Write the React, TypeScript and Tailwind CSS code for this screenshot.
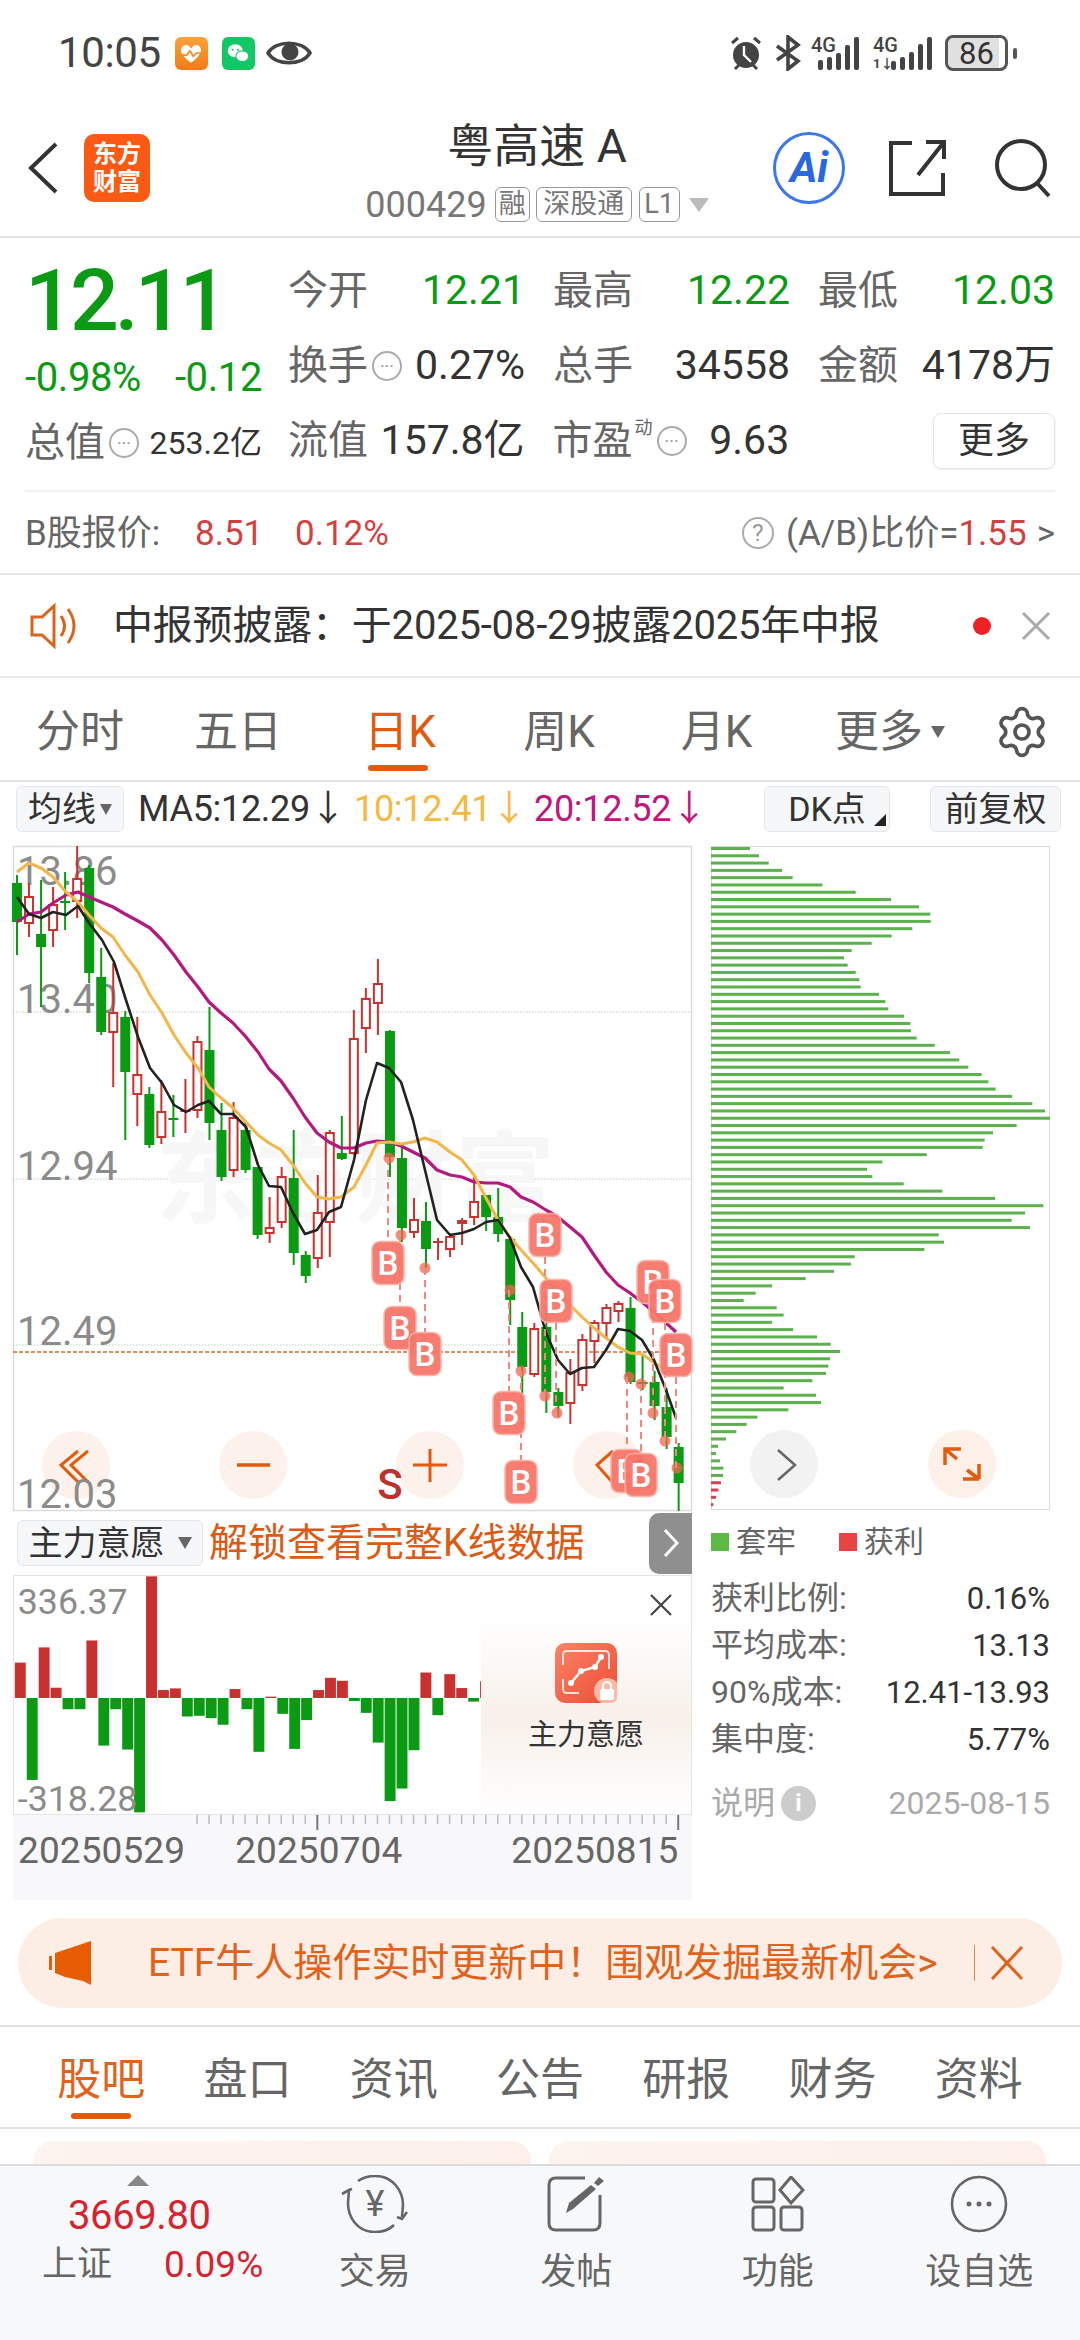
import React from 'react';
import { Settings } from 'lucide-react';

const GREEN = '#0a9a14';
const RED = '#c8322f';

// high, bodyTop, bodyBottom, low, kind (g = solid green, r = solid red, h = hollow red)
const candles: [number, number, number, number, string][] = [
  [875, 883, 922, 955, 'g'], [883, 897, 923, 937, 'h'], [880, 934, 947, 1007, 'g'], [887, 905, 930, 947, 'h'],
  [872, 901, 903, 930, 'g'], [846, 879, 901, 918, 'h'], [865, 868, 973, 983, 'g'], [948, 977, 1032, 1035, 'g'],
  [963, 1013, 1032, 1087, 'h'], [1011, 1017, 1072, 1140, 'g'], [1017, 1075, 1094, 1126, 'h'], [1087, 1094, 1145, 1148, 'g'],
  [1080, 1112, 1137, 1144, 'h'], [1095, 1118, 1120, 1137, 'g'], [1079, 1110, 1112, 1133, 'r'], [1036, 1042, 1110, 1118, 'h'],
  [1007, 1050, 1123, 1140, 'g'], [1103, 1130, 1177, 1181, 'g'], [1102, 1118, 1170, 1177, 'h'], [1122, 1130, 1170, 1173, 'g'],
  [1167, 1167, 1235, 1239, 'g'], [1197, 1228, 1233, 1243, 'h'], [1167, 1177, 1222, 1228, 'h'], [1130, 1178, 1253, 1265, 'g'],
  [1251, 1255, 1276, 1283, 'g'], [1175, 1213, 1258, 1268, 'h'], [1130, 1133, 1222, 1257, 'h'], [1116, 1153, 1159, 1160, 'g'],
  [1010, 1039, 1153, 1155, 'h'], [988, 999, 1028, 1053, 'h'], [959, 984, 1003, 1035, 'h'], [1030, 1031, 1157, 1177, 'g'],
  [1148, 1158, 1228, 1242, 'g'], [1198, 1220, 1232, 1238, 'h'], [1202, 1221, 1249, 1268, 'g'], [1238, 1241, 1243, 1260, 'r'],
  [1233, 1237, 1249, 1257, 'h'], [1218, 1220, 1224, 1245, 'r'], [1177, 1202, 1217, 1225, 'h'], [1195, 1195, 1217, 1231, 'g'],
  [1188, 1217, 1234, 1242, 'g'], [1238, 1239, 1300, 1325, 'g'], [1312, 1327, 1367, 1395, 'g'], [1323, 1329, 1374, 1377, 'h'],
  [1310, 1327, 1392, 1413, 'g'], [1388, 1392, 1406, 1417, 'g'], [1359, 1373, 1403, 1424, 'h'], [1334, 1340, 1385, 1391, 'h'],
  [1320, 1323, 1341, 1363, 'h'], [1304, 1308, 1323, 1338, 'h'], [1301, 1304, 1311, 1322, 'h'], [1297, 1308, 1382, 1384, 'g'],
  [1355, 1382, 1384, 1390, 'g'], [1371, 1382, 1406, 1420, 'g'], [1388, 1407, 1437, 1449, 'g'], [1443, 1447, 1483, 1511, 'g'],
];

const ma5 = '17,897 29,914 41,918 53,912 66,915 78,906 89,923 102,940 114,962 125,997 138,1037 150,1068 162,1083 174,1105 186,1112 198,1105 209,1101 221,1114 233,1114 246,1127 258,1165 269,1186 281,1187 293,1213 305,1234 317,1230 329,1212 341,1207 354,1160 366,1100 377,1063 389,1068 401,1082 413,1120 425,1170 437,1220 450,1235 462,1233 474,1229 486,1222 498,1220 510,1238 521,1267 533,1287 546,1333 558,1360 570,1374 582,1368 594,1367 606,1350 618,1329 630,1331 642,1340 654,1360 666,1390 676,1418';
const ma10 = '17,872 29,863 41,868 53,877 66,892 78,902 89,915 101,928 113,937 125,955 138,972 150,995 162,1013 174,1035 186,1053 198,1068 209,1087 221,1098 233,1108 246,1122 258,1135 269,1143 281,1150 293,1165 305,1183 317,1197 329,1199 341,1197 354,1187 366,1165 377,1143 389,1142 401,1144 413,1142 425,1138 437,1142 450,1152 462,1160 474,1175 486,1198 498,1220 510,1237 521,1250 533,1263 546,1278 558,1290 570,1305 582,1317 594,1328 606,1338 618,1347 630,1353 642,1354 656,1364 674,1373';
const ma20 = '17,922 29,914 41,912 53,903 66,895 78,892 89,897 101,902 113,907 125,914 138,921 150,928 162,940 174,955 186,972 198,987 209,1002 221,1013 233,1023 246,1037 258,1052 269,1069 281,1081 293,1098 305,1117 317,1133 329,1142 341,1148 354,1148 366,1143 377,1141 389,1142 401,1146 413,1152 425,1158 437,1170 450,1175 462,1177 474,1182 486,1183 498,1183 510,1187 521,1197 533,1202 546,1210 558,1217 570,1227 582,1237 594,1255 606,1272 618,1285 630,1293 642,1302 654,1312 665,1322 676,1332';

// marker x, marker y, dash from, dash to
const buyMarks: [number, number, number, number][] = [
  [388, 1263, 1158, 1241], [400, 1328, 1235, 1306], [425, 1354, 1268, 1332], [545, 1235, 1257, 1396],
  [556, 1301, 1323, 1413], [509, 1413, 1290, 1391], [521, 1482, 1371, 1460], [653, 1282, 1304, 1413],
  [665, 1301, 1323, 1441], [676, 1355, 1377, 1468], [627, 1471, 1377, 1450], [641, 1475, 1384, 1453],
];
const dots: [number, number][] = [
  [389, 1158], [401, 1235], [425, 1268], [510, 1290], [521, 1371], [545, 1396], [557, 1413], [629, 1377], [641, 1384], [653, 1413], [665, 1441], [677, 1468],
];

const chipEnds = [180, 207, 236, 276, 308, 397, 497, 603, 687, 721, 722, 667, 605, 545, 485, 462, 473, 497, 508, 512, 567, 586, 595, 642, 661, 663, 680, 734, 780, 808, 835, 875, 895, 917, 966, 1027, 1065, 1080, 980, 909, 884, 878, 710, 577, 531, 547, 641, 757, 915, 1060, 1005, 965, 1020, 746, 762, 703, 494, 483, 432, 347, 246, 197, 161, 260, 281, 246, 309, 381, 422, 450, 420, 415, 408, 367, 281, 378, 393, 295, 202, 170, 139, 108, 84, 78, 90, 100, 99, 93, 85, 78, 70];

const flowBars = [487, 842, 441, 563, 628, 628, 420, 738, 628, 750, 940, 226, 570, 565, 650, 648, 655, 675, 567, 628, 757, 590, 642, 748, 661, 570, 533, 542, 603, 639, 729, 906, 868, 752, 517, 646, 522, 564, 605, 543];

const candleX = (i: number) => 17 + 12.03 * i;

const Ball = ({ x, fill = '#fdf0e9' }: { x: number; fill?: string }) => <circle cx={x} cy={1465} r={34} fill={fill} opacity={0.92} />;

const KChart = () => (
  <svg viewBox="13 846 679 665" className="block h-[665px] w-[679px] overflow-visible">
    <rect x="13.5" y="846.5" width="678" height="664" fill="#fff" stroke="#dcdcdc" strokeWidth="1.5" />
    {[1012, 1179, 1345].map((y) => (
      <line key={y} x1="13" x2="692" y1={y} y2={y} stroke="#c8c8c8" strokeDasharray="1.5 1.5" />
    ))}
    <text x="355" y="1215" textAnchor="middle" fontSize="100" fontWeight="700" fill="#f7f7f7">东方财富</text>
    <line x1="13" x2="692" y1="1352" y2="1352" stroke="#cf6a30" strokeWidth="1.5" strokeDasharray="4 2" />
    <Ball x={76} />
    <Ball x={253} />
    <Ball x={430} />
    <Ball x={607} />
    <path d="M78 1451 L61 1465 L78 1482 M88 1451 L71 1465 L88 1482" fill="none" stroke="#e35a0d" strokeWidth="3" />
    <path d="M237 1465 H270" stroke="#e35a0d" strokeWidth="3.5" />
    <path d="M413 1465 H447 M430 1449 V1482" stroke="#e35a0d" strokeWidth="3" />
    <path d="M613 1451 L597 1465 L613 1483" fill="none" stroke="#e35a0d" strokeWidth="3" />
    <g fill="#8b8b8b" fontSize="40">
      <text x="17" y="885">13.86</text>
      <text x="17" y="1013">13.40</text>
      <text x="17" y="1180">12.94</text>
      <text x="17" y="1345">12.49</text>
      <text x="17" y="1508">12.03</text>
    </g>
    {candles.map(([high, top, bottom, low, kind], i) => {
      const x = candleX(i);
      const color = kind === 'g' ? GREEN : RED;
      return (
        <g key={i}>
          <line x1={x} x2={x} y1={high} y2={low} stroke={color} strokeWidth="2" />
          {kind === 'h' ? (
            <rect x={x - 4} y={top} width="8" height={bottom - top} fill="#fff" stroke={color} strokeWidth="2" />
          ) : (
            <rect x={x - 5} y={top} width="10" height={Math.max(bottom - top, 2)} fill={color} />
          )}
        </g>
      );
    })}
    <polyline points={ma20} fill="none" stroke="#b5187f" strokeWidth="3.2" strokeLinejoin="round" />
    <polyline points={ma10} fill="none" stroke="#f2b64b" strokeWidth="3" strokeLinejoin="round" />
    <polyline points={ma5} fill="none" stroke="#222" strokeWidth="2.6" strokeLinejoin="round" />
    {dots.map(([x, y], i) => (
      <circle key={i} cx={x} cy={y} r="5.5" fill="#f0674f" opacity="0.75" />
    ))}
    {buyMarks.map(([x, y, from, to], i) => (
      <line key={i} x1={x} x2={x} y1={from} y2={to} stroke="#f0897d" strokeWidth="2" strokeDasharray="7 5" />
    ))}
    {buyMarks.map(([x, y], i) => (
      <g key={i}>
        <rect x={x - 16} y={y - 21.5} width="32" height="43" rx="8" fill="#f7766a" stroke="#fbb0a6" strokeWidth="1.5" opacity="0.95" />
        <text x={x} y={y + 12} textAnchor="middle" fontSize="33" fontWeight="500" fill="#fff">B</text>
      </g>
    ))}
    <text x="390" y="1499" textAnchor="middle" fontSize="42" fontWeight="500" fill="#c03030">S</text>
  </svg>
);

const FlowChart = () => (
  <div className="relative h-[240px] w-[679px] border border-[#e4e4e4]">
    <svg viewBox="13 1575 679 240" className="block h-[238px] w-[677px] overflow-visible">
      {flowBars.map((v, i) => {
        const y = 1500 + v / 3;
        const x = candleX(i) - 5;
        return y < 1698 ? (
          <rect key={i} x={x} y={y} width="11" height={1698 - y} fill="#c93030" />
        ) : (
          <rect key={i} x={x} y={1698} width="11" height={y - 1698} fill="#0a9a14" />
        );
      })}
      <g fill="#8b8b8b" fontSize="36">
        <text x="15" y="1613">336.37</text>
        <text x="15" y="1812">-318.28</text>
      </g>
    </svg>
    {/* locked indicator overlay */}
    <div className="absolute right-0 bottom-0 flex h-[195px] w-[210px] flex-col items-center bg-gradient-to-b from-white via-[#f8f0ea] to-white pt-[24px]">
      <div className="relative h-[60px] w-[62px] rounded-[10px] bg-gradient-to-br from-[#fb8266] to-[#ec4a32]">
        <svg viewBox="0 0 62 60" className="absolute inset-0">
          <path d="M8 22 V12 Q8 8 12 8 H50 Q54 8 54 12 V26 M8 36 V46 Q8 50 12 50 H24" fill="none" stroke="#fff" strokeWidth="2" opacity="0.8" />
          <path d="M16 40 L26 28 L40 24 L46 14" fill="none" stroke="#fff" strokeWidth="2.5" />
          <circle cx="16" cy="40" r="3" fill="#fff" />
          <circle cx="26" cy="28" r="3" fill="#fff" />
          <circle cx="40" cy="24" r="3" fill="#fff" />
          <circle cx="46" cy="14" r="3" fill="#fff" />
          <circle cx="52" cy="48" r="13" fill="#fcb9a5" />
          <rect x="45" y="46" width="14" height="11" rx="2" fill="#fff" />
          <path d="M48 46 V43 a4 4 0 0 1 8 0 V46" fill="none" stroke="#fff" strokeWidth="2" />
        </svg>
      </div>
      <div className="mt-[12px] text-[29px] leading-[40px] text-[#333]">主力意愿</div>
    </div>
    <svg viewBox="0 0 24 24" className="absolute top-[17px] right-[18px] h-[24px] w-[24px]">
      <path d="M2 2 L22 22 M22 2 L2 22" stroke="#444" strokeWidth="2.2" />
    </svg>
  </div>
);

const ChipChart = () => (
  <svg viewBox="711 847 339 664" className="block h-[664px] w-[339px]">
    <rect x="711" y="847" width="339" height="664" fill="#fff" stroke="#cfcfcf" strokeWidth="1.5" />
    {chipEnds.map((end, i) => (
      <rect key={i} x="711" y={848 + i * 7.29} width={(end - 63) / 3} height="3" fill={i > 86 ? '#d4434f' : '#5cb04e'} />
    ))}
    <circle cx="784" cy="1465" r="34" fill="#f2f2f2" />
    <circle cx="962" cy="1465" r="34" fill="#fdf0e9" />
    <path d="M778 1451 L795 1466 L778 1481" fill="none" stroke="#666" strokeWidth="2.5" />
    <path d="M945 1466 V1450 H961 M945 1450 L957 1460 M979 1480 H963 M979 1480 L967 1471 M979 1480 V1465" fill="none" stroke="#e35a0d" strokeWidth="3.5" />
  </svg>
);

const InfoDots = () => (
  <span className="mx-[4px] inline-flex h-[30px] w-[30px] shrink-0 items-center justify-center rounded-full border-[2px] border-[#aaa] text-[#999]">
    <span className="mb-[10px] text-[18px] leading-none">...</span>
  </span>
);

const Stat = ({ label, value, color = 'text-[#333]', extra }: { label: string; value: string; color?: string; extra?: React.ReactNode }) => (
  <div className="flex w-[237px] items-center justify-between">
    <span className="flex items-center text-[40px] leading-none text-[#666]">
      {label}
      {extra}
    </span>
    <span className={`text-[41px] leading-none ${color}`}>{value}</span>
  </div>
);

const Signal = ({ heights, extra }: { heights: number[]; extra?: boolean }) => (
  <span className="relative flex h-[34px] items-end gap-[4px]">
    <span className={`absolute top-[-1px] text-[20px] leading-none font-medium text-[#444] ${extra ? 'left-[-18px]' : 'left-[-7px]'}`}>4G</span>
    {extra && <span className="absolute bottom-0 left-[-18px] text-[13px] leading-none font-bold text-[#444]">1↓</span>}
    {heights.map((h) => (
      <span key={h} className="w-[5px] rounded-[2px] bg-[#444]" style={{ height: h }} />
    ))}
  </span>
);

const StatusBar = () => (
  <div className="flex h-[100px] items-center pt-[6px] pr-[63px] pl-[58px]">
    <span className="text-[42px] leading-none tracking-[-0.4px] text-[#444]">10:05</span>
    <span className="ml-[14px] flex h-[33px] w-[33px] items-center justify-center rounded-[6px] bg-gradient-to-b from-[#fba23a] to-[#f27a14]">
      <svg viewBox="0 0 24 24" className="h-[26px] w-[26px]"><path d="M12 21 C4 15 2 11 3 8 C4 4 9 3 12 8 C15 3 20 4 21 8 C22 11 20 15 12 21Z" fill="#fff" /><path d="M0 14 H8 L11 10 L14 15 L17 12 H24" fill="none" stroke="#f58a1e" strokeWidth="1.6" /></svg>
    </span>
    <span className="ml-[14px] flex h-[33px] w-[33px] items-center justify-center rounded-[6px] bg-[#12c866]">
      <svg viewBox="0 0 24 24" className="h-[26px] w-[26px]"><ellipse cx="9.5" cy="10" rx="7" ry="6" fill="#fff" /><ellipse cx="16" cy="15" rx="6" ry="5" fill="#fff" stroke="#12c866" /><circle cx="7" cy="9" r="1" fill="#12c866" /><circle cx="12" cy="9" r="1" fill="#12c866" /></svg>
    </span>
    <svg viewBox="0 0 46 30" className="ml-[11px] h-[30px] w-[46px]"><path d="M2 15 C10 2 36 2 44 15 C36 28 10 28 2 15Z" fill="none" stroke="#444" strokeWidth="3.5" /><circle cx="24" cy="14" r="8.5" fill="#444" /></svg>
    <span className="flex-1" />
    <svg viewBox="0 0 36 36" className="h-[36px] w-[36px]"><circle cx="18" cy="20" r="13" fill="#444" /><path d="M16 11 V20 L23 27" fill="none" stroke="#fff" strokeWidth="2.4" /><path d="M4 8 L10 3 M32 8 L26 3 M7 34 L11 30 M29 34 L25 30" stroke="#444" strokeWidth="3" /></svg>
    <svg viewBox="0 0 26 36" className="ml-[11px] h-[36px] w-[26px]"><path d="M2 11 L23 26 L13 34 V2 L23 10 L2 25" fill="none" stroke="#444" strokeWidth="3.6" /></svg>
    <span className="ml-[17px]"><Signal heights={[10, 13, 17, 25, 33]} /></span>
    <span className="ml-[32px]"><Signal extra heights={[9, 13, 18, 26, 33]} /></span>
    <span className="ml-[13px] flex h-[36px] w-[63px] items-center justify-center rounded-[8px] border-[3px] border-[#555] bg-[linear-gradient(to_right,#e0e0e0_90%,#fff_90%)] text-[31px] leading-none text-[#333]">86</span>
    <span className="ml-[5px] h-[11px] w-[4px] rounded-[2px] bg-[#555]" />
  </div>
);

const Badge = ({ children, className }: { children: React.ReactNode; className: string }) => (
  <span className={`flex h-[35px] items-center justify-center rounded-[6px] border border-[#999] text-[27px] leading-none text-[#777] ${className}`}>{children}</span>
);

const Header = () => (
  <div className="flex h-[138px] items-center border-b-2 border-[#e2e2e2]">
    <svg viewBox="0 0 32 52" className="ml-[27px] h-[52px] w-[32px]"><path d="M29 2 L4 26 L29 50" fill="none" stroke="#333" strokeWidth="4" /></svg>
    <div className="ml-[25px] flex h-[68px] w-[66px] flex-col items-center justify-center rounded-[10px] bg-[#fa5a14] text-[24px] leading-[28px] font-bold text-white">
      <span>东方</span>
      <span>财富</span>
    </div>
    <div className="ml-[167px] flex w-[440px] flex-col items-center pt-[4px]">
      <div className="text-[46px] leading-[56px] text-[#333]">粤高速 A</div>
      <div className="mt-[13px] flex items-center text-[#777]">
        <span className="mr-[8px] text-[36px] leading-none">000429</span>
        <Badge className="w-[35px]">融</Badge>
        <Badge className="ml-[6px] w-[96px]">深股通</Badge>
        <Badge className="ml-[7px] w-[41px]">L1</Badge>
        <span className="ml-[9px] h-0 w-0 border-x-[10px] border-t-[14px] border-x-transparent border-t-[#bbb]" />
      </div>
    </div>
    <span className="ml-[16px] flex h-[72px] w-[72px] items-center justify-center rounded-full border-[3px] border-[#3d78e8] text-[42px] leading-none font-bold text-[#2a68e0] italic">Ai</span>
    <svg viewBox="0 0 58 58" className="ml-[43px] h-[58px] w-[58px]"><path d="M24 4 H3 V55 H55 V34 M56 3 L30 36 M38 3 H56 V20" fill="none" stroke="#333" strokeWidth="4" /></svg>
    <svg viewBox="0 0 60 60" className="ml-[47px] h-[60px] w-[60px]"><circle cx="28" cy="27" r="24" fill="none" stroke="#333" strokeWidth="4" /><path d="M44 45 L56 58" stroke="#333" strokeWidth="4" /></svg>
  </div>
);

const Quote = () => (
  <div className="h-[335px] px-[25px] pt-[15px]">
    <div className="flex h-[225px]">
      <div className="w-[238px]">
        <div className="flex h-[96px] items-center text-[86px] leading-none font-medium tracking-[-4px] text-[#0a9a14]">12.11</div>
        <div className="flex h-[58px] items-center justify-between text-[40px] leading-none tracking-[-0.4px] text-[#0a9a14]">
          <span>-0.98%</span>
          <span>-0.12</span>
        </div>
        <div className="flex h-[71px] items-center justify-between">
          <span className="flex items-center text-[40px] leading-none text-[#666]">总值<InfoDots /></span>
          <span className="text-[32px] leading-none text-[#333]">253.2亿</span>
        </div>
      </div>
      <div className="ml-[26px] flex w-[767px] flex-col">
        <div className="flex h-[75px] gap-[28px]">
          <Stat label="今开" value="12.21" color="text-[#0a9a14]" />
          <Stat label="最高" value="12.22" color="text-[#0a9a14]" />
          <Stat label="最低" value="12.03" color="text-[#0a9a14]" />
        </div>
        <div className="flex h-[75px] gap-[28px]">
          <Stat label="换手" value="0.27%" extra={<InfoDots />} />
          <Stat label="总手" value="34558" />
          <Stat label="金额" value="4178万" />
        </div>
        <div className="flex h-[75px] gap-[28px]">
          <Stat label="流值" value="157.8亿" />
          <Stat
            label="市盈"
            value="9.63"
            extra={
              <>
                <span className="mb-[26px] ml-[2px] text-[18px] leading-none text-[#666]">动</span>
                <InfoDots />
              </>
            }
          />
          <div className="ml-[116px] flex h-[56px] w-[122px] items-center justify-center self-center rounded-[8px] border border-[#e4e4e4] text-[36px] leading-none text-[#333] shadow-[0_1px_2px_rgba(0,0,0,0.08)]">更多</div>
        </div>
      </div>
    </div>
    <div className="mt-[12px] h-[2px] bg-[#f0f0f0]" />
    <div className="flex h-[82px] items-center text-[35px] leading-none">
      <span className="w-[170px] text-[#666]">B股报价:</span>
      <span className="w-[100px] text-[#d43f3f]">8.51</span>
      <span className="text-[#d43f3f]">0.12%</span>
      <span className="flex-1" />
      <span className="mr-[12px] flex h-[32px] w-[32px] items-center justify-center rounded-full border-[2px] border-[#aaa] text-[24px] text-[#999]">?</span>
      <span className="text-[#666]">(A/B)比价=</span>
      <span className="text-[#d43f3f]">1.55</span>
      <span className="ml-[10px] text-[#666]">&gt;</span>
    </div>
  </div>
);

const Notice = () => (
  <div className="flex h-[105px] items-center border-y-2 border-[#e8e8e8]">
    <svg viewBox="0 0 50 46" className="ml-[30px] h-[46px] w-[50px]"><path d="M2 14 H12 L24 3 V43 L12 32 H2Z M31 13 Q38 23 31 33 M38 6 Q50 23 38 40" fill="none" stroke="#d9641c" strokeWidth="3" /></svg>
    <span className="ml-[33px] text-[40px] leading-none tracking-[-0.2px] text-[#333]">{'中报预披露\uFF1A于2025-08-29披露2025年中报'}</span>
    <span className="flex-1" />
    <span className="h-[18px] w-[18px] rounded-full bg-[#ee2222]" />
    <svg viewBox="0 0 30 30" className="mr-[29px] ml-[30px] h-[30px] w-[30px]"><path d="M2 2 L28 28 M28 2 L2 28" stroke="#aaa" strokeWidth="3" /></svg>
  </div>
);

const KTabs = () => (
  <div className="flex h-[104px] items-center border-b-2 border-[#e2e2e2] pt-[6px] text-[44px] leading-none text-[#666]">
    <span className="w-[160px] text-center">分时</span>
    <span className="w-[156px] text-center">五日</span>
    <span className="relative flex h-full w-[168px] items-center justify-center text-[#e35a0d]">
      日K
      <span className="absolute bottom-[9px] left-[52px] h-[6px] w-[60px] rounded-[3px] bg-[#e35a0d]" />
    </span>
    <span className="w-[150px] text-center">周K</span>
    <span className="w-[165px] text-center">月K</span>
    <span className="flex w-[176px] items-center justify-center pl-[6px]">
      更多
      <span className="ml-[8px] h-0 w-0 border-x-[7px] border-t-[12px] border-x-transparent border-t-[#666]" />
    </span>
    <Settings className="ml-[19px] h-[56px] w-[56px] text-[#555]" strokeWidth={1.6} />
  </div>
);

const ToolButton = ({ children, className }: { children: React.ReactNode; className: string }) => (
  <span className={`flex h-[46px] items-center justify-center rounded-[6px] border border-[#e4e6ea] bg-[#f6f7f9] text-[34px] leading-none text-[#333] ${className}`}>{children}</span>
);

const MaBar = () => (
  <div className="flex h-[64px] items-center pb-[10px] pl-[16px]">
    <ToolButton className="w-[108px]">
      均线
      <span className="ml-[4px] h-0 w-0 border-x-[6px] border-t-[11px] border-x-transparent border-t-[#666]" />
    </ToolButton>
    <span className="ml-[14px] w-[216px] text-[36px] leading-none tracking-[-0.3px] text-[#333]">MA5:12.29↓</span>
    <span className="w-[180px] text-[36px] leading-none tracking-[-0.3px] text-[#f5b843]">10:12.41↓</span>
    <span className="w-[230px] text-[36px] leading-none tracking-[-0.3px] text-[#c0177f]">20:12.52↓</span>
    <ToolButton className="relative w-[126px]">
      DK点
      <span className="absolute right-[3px] bottom-[5px] h-0 w-0 border-b-[12px] border-l-[12px] border-b-[#222] border-l-transparent" />
    </ToolButton>
    <ToolButton className="ml-[40px] w-[131px]">前复权</ToolButton>
  </div>
);

const AxisStrip = () => (
  <div className="h-[85px] w-[679px] bg-[#f8f8fa]">
    <svg viewBox="13 1815 679 16" className="block h-[16px] w-[679px]">
      {Array.from({ length: 41 }, (_, i) => {
        const x = 197 + i * 12.03;
        const major = i === 10 || i === 40;
        return <line key={i} x1={x} x2={x} y1="1815" y2={major ? 1830 : 1824} stroke={major ? '#777' : '#bbb'} strokeWidth={major ? 2 : 1.5} />;
      })}
    </svg>
    <div className="flex pl-[5px] text-[37px] leading-[40px] tracking-[0.1px] text-[#666]">
      <span>20250529</span>
      <span className="ml-[50px]">20250704</span>
      <span className="ml-[109px]">20250815</span>
    </div>
  </div>
);

const ChipStats = () => (
  <div className="w-[339px]">
    <div className="flex h-[64px] items-center text-[30px] leading-none text-[#666]">
      <span className="h-[18px] w-[18px] bg-[#5cb944]" />
      <span className="ml-[7px] w-[103px]">套牢</span>
      <span className="h-[18px] w-[18px] bg-[#e84444]" />
      <span className="ml-[7px]">获利</span>
    </div>
    <div className="mt-[1px] flex flex-col leading-[47px]">
      {[
        ['获利比例:', '0.16%'],
        ['平均成本:', '13.13'],
        ['90%成本:', '12.41-13.93'],
        ['集中度:', '5.77%'],
      ].map(([k, v]) => (
        <div key={k} className="flex items-center justify-between">
          <span className="text-[32px] text-[#666]">{k}</span>
          <span className="text-[31px] text-[#333]">{v}</span>
        </div>
      ))}
    </div>
    <div className="mt-[22px] flex items-center text-[32px] leading-[36px] text-[#aaa]">
      <span>说明</span>
      <span className="ml-[6px] flex h-[35px] w-[35px] items-center justify-center rounded-full bg-[#ccc] text-[24px] font-bold text-white">i</span>
      <span className="flex-1" />
      <span>2025-08-15</span>
    </div>
  </div>
);

const ChartArea = () => (
  <div className="flex">
    <div className="ml-[13px] w-[679px]">
      <KChart />
      <div className="flex h-[64px] w-[679px] items-center justify-between">
        <div className="flex items-center pl-[4px]">
          <span className="flex h-[46px] w-[186px] items-center justify-center rounded-[6px] border border-[#e4e6ea] bg-[#f6f7f9] text-[34px] leading-none text-[#333]">
            主力意愿
            <span className="ml-[13px] h-0 w-0 border-x-[7px] border-t-[12px] border-x-transparent border-t-[#666]" />
          </span>
          <span className="ml-[6px] text-[39px] leading-none text-[#dc5a14]">解锁查看完整K线数据</span>
        </div>
        <span className="flex h-[61px] w-[43px] items-center justify-center rounded-l-[10px] bg-[#8f8f8f]">
          <svg viewBox="0 0 16 30" className="h-[30px] w-[16px]"><path d="M2 2 L14 15 L2 28" fill="none" stroke="#fff" strokeWidth="3" /></svg>
        </span>
      </div>
      <FlowChart />
      <AxisStrip />
    </div>
    <div className="ml-[19px] w-[339px]">
      <ChipChart />
      <ChipStats />
    </div>
  </div>
);

const Promo = () => (
  <div className="mt-[18px] px-[18px]">
    <div className="flex h-[90px] items-center rounded-[45px] bg-[#fdeee5]">
      <svg viewBox="0 0 46 44" className="ml-[29px] h-[44px] w-[46px]"><path d="M2 15 H5 V29 H2Z M8 12 L44 0 V44 L36 40 L18 36 L8 32Z" fill="#e85d04" /></svg>
      <span className="ml-[55px] text-[39px] leading-none whitespace-nowrap text-[#e0621b]">{'ETF牛人操作实时更新中\uFF01围观发掘最新机会>'}</span>
      <span className="flex-1" />
      <span className="h-[36px] w-px bg-[#d98a5c]" />
      <svg viewBox="0 0 34 36" className="mr-[38px] ml-[15px] h-[36px] w-[34px]"><path d="M2 2 L32 34 M32 2 L2 34" stroke="#e0621b" strokeWidth="3" /></svg>
    </div>
  </div>
);

const SubTabs = () => (
  <div className="mt-[17px] border-y-2 border-[#e2e2e2]">
    <div className="grid h-[100px] grid-cols-7 items-center px-[28px] pt-[5px] text-[44px] leading-none text-[#666]">
      {['股吧', '盘口', '资讯', '公告', '研报', '财务', '资料'].map((t, i) => (
        <span key={t} className={`relative flex h-full items-center justify-center ${i === 0 ? 'text-[#e0621b]' : ''}`}>
          {t}
          {i === 0 && <span className="absolute bottom-[8px] h-[6px] w-[60px] rounded-[3px] bg-[#e35a0d]" />}
        </span>
      ))}
    </div>
  </div>
);

const TradeIcon = () => (
  <svg viewBox="0 0 67 58" className="h-[58px] w-[67px]">
    <path d="M17 6 Q24 1 34 1 C52 1 62 16 62 30 L61 42 M53 50 Q46 57 34 57 C16 57 7 42 7 28 L8 15" fill="none" stroke="#666" strokeWidth="2.6" />
    <path d="M56 42 L61 44 L66 37 M1 19 L8 15 L11 14" fill="none" stroke="#666" strokeWidth="2.6" />
    <text x="34" y="41" textAnchor="middle" fontSize="36" fill="#666">¥</text>
  </svg>
);

const WriteIcon = () => (
  <svg viewBox="0 0 58 58" className="h-[58px] w-[58px]">
    <path d="M38 3 H9 Q2 3 2 10 V48 Q2 55 9 55 H46 Q53 55 53 48 V20" fill="none" stroke="#666" strokeWidth="3" />
    <path d="M19 38 L22 28 L44 10 L49 14 L26 34Z" fill="#666" />
    <path d="M47 8 L52 2 L57 6 L51 11Z" fill="#666" />
  </svg>
);

const GridIcon = () => (
  <svg viewBox="0 0 54 56" className="h-[56px] w-[54px]">
    <rect x="2" y="3" width="21" height="23" rx="3" fill="none" stroke="#666" strokeWidth="3" />
    <rect x="2" y="31" width="21" height="23" rx="3" fill="none" stroke="#666" strokeWidth="3" />
    <rect x="30" y="31" width="21" height="23" rx="3" fill="none" stroke="#666" strokeWidth="3" />
    <path d="M40 1 L52 14 L40 27 L29 14Z" fill="none" stroke="#666" strokeWidth="3" />
  </svg>
);

const MoreIcon = () => (
  <svg viewBox="0 0 58 58" className="h-[58px] w-[58px]">
    <circle cx="29" cy="29" r="27" fill="none" stroke="#666" strokeWidth="2.6" />
    <circle cx="19" cy="29" r="2.5" fill="#666" />
    <circle cx="29" cy="29" r="2.5" fill="#666" />
    <circle cx="39" cy="29" r="2.5" fill="#666" />
  </svg>
);

const BottomBar = () => (
  <div className="flex h-[176px] border-t-2 border-[#dcdcdc] bg-[#f7f8fa]">
    <div className="flex w-[274px] flex-col pt-[9px]">
      <span className="ml-[127px] h-0 w-0 border-x-[11px] border-b-[11px] border-x-transparent border-b-[#888]" />
      <span className="mt-[6px] ml-[68px] text-[40px] leading-[48px] tracking-[-0.4px] text-[#d7232f]">3669.80</span>
      <div className="mt-[3px] flex items-center pl-[42px] leading-[44px]">
        <span className="text-[35px] text-[#666]">上证</span>
        <span className="ml-[52px] text-[37px] text-[#d7232f]">0.09%</span>
      </div>
    </div>
    {[
      ['交易', <TradeIcon key="t" />],
      ['发帖', <WriteIcon key="w" />],
      ['功能', <GridIcon key="g" />],
      ['设自选', <MoreIcon key="m" />],
    ].map(([label, icon]) => (
      <div key={label as string} className="flex w-[201.5px] flex-col items-center pt-[9px]">
        <div className="flex h-[58px] items-center">{icon}</div>
        <span className="mt-[17px] text-[36px] leading-[44px] text-[#666]">{label}</span>
      </div>
    ))}
  </div>
);

const App: React.FC = () => {
  return (
    <div className="flex h-[2340px] w-[1080px] flex-col overflow-hidden bg-white font-['Roboto','Noto_Sans_CJK_SC',sans-serif]">
      <StatusBar />
      <Header />
      <Quote />
      <Notice />
      <KTabs />
      <MaBar />
      <ChartArea />
      <Promo />
      <SubTabs />
      <div className="flex h-[35px] gap-[18px] px-[34px] pt-[12px]">
        <div className="h-[40px] w-[500px] rounded-t-[20px] bg-gradient-to-r from-[#fdf3ef] to-[#fdf0ea]" />
        <div className="h-[40px] w-[500px] rounded-t-[20px] bg-gradient-to-r from-[#fdf3ef] to-[#fdf0ea]" />
      </div>
      <BottomBar />
    </div>
  );
};

export default App;
